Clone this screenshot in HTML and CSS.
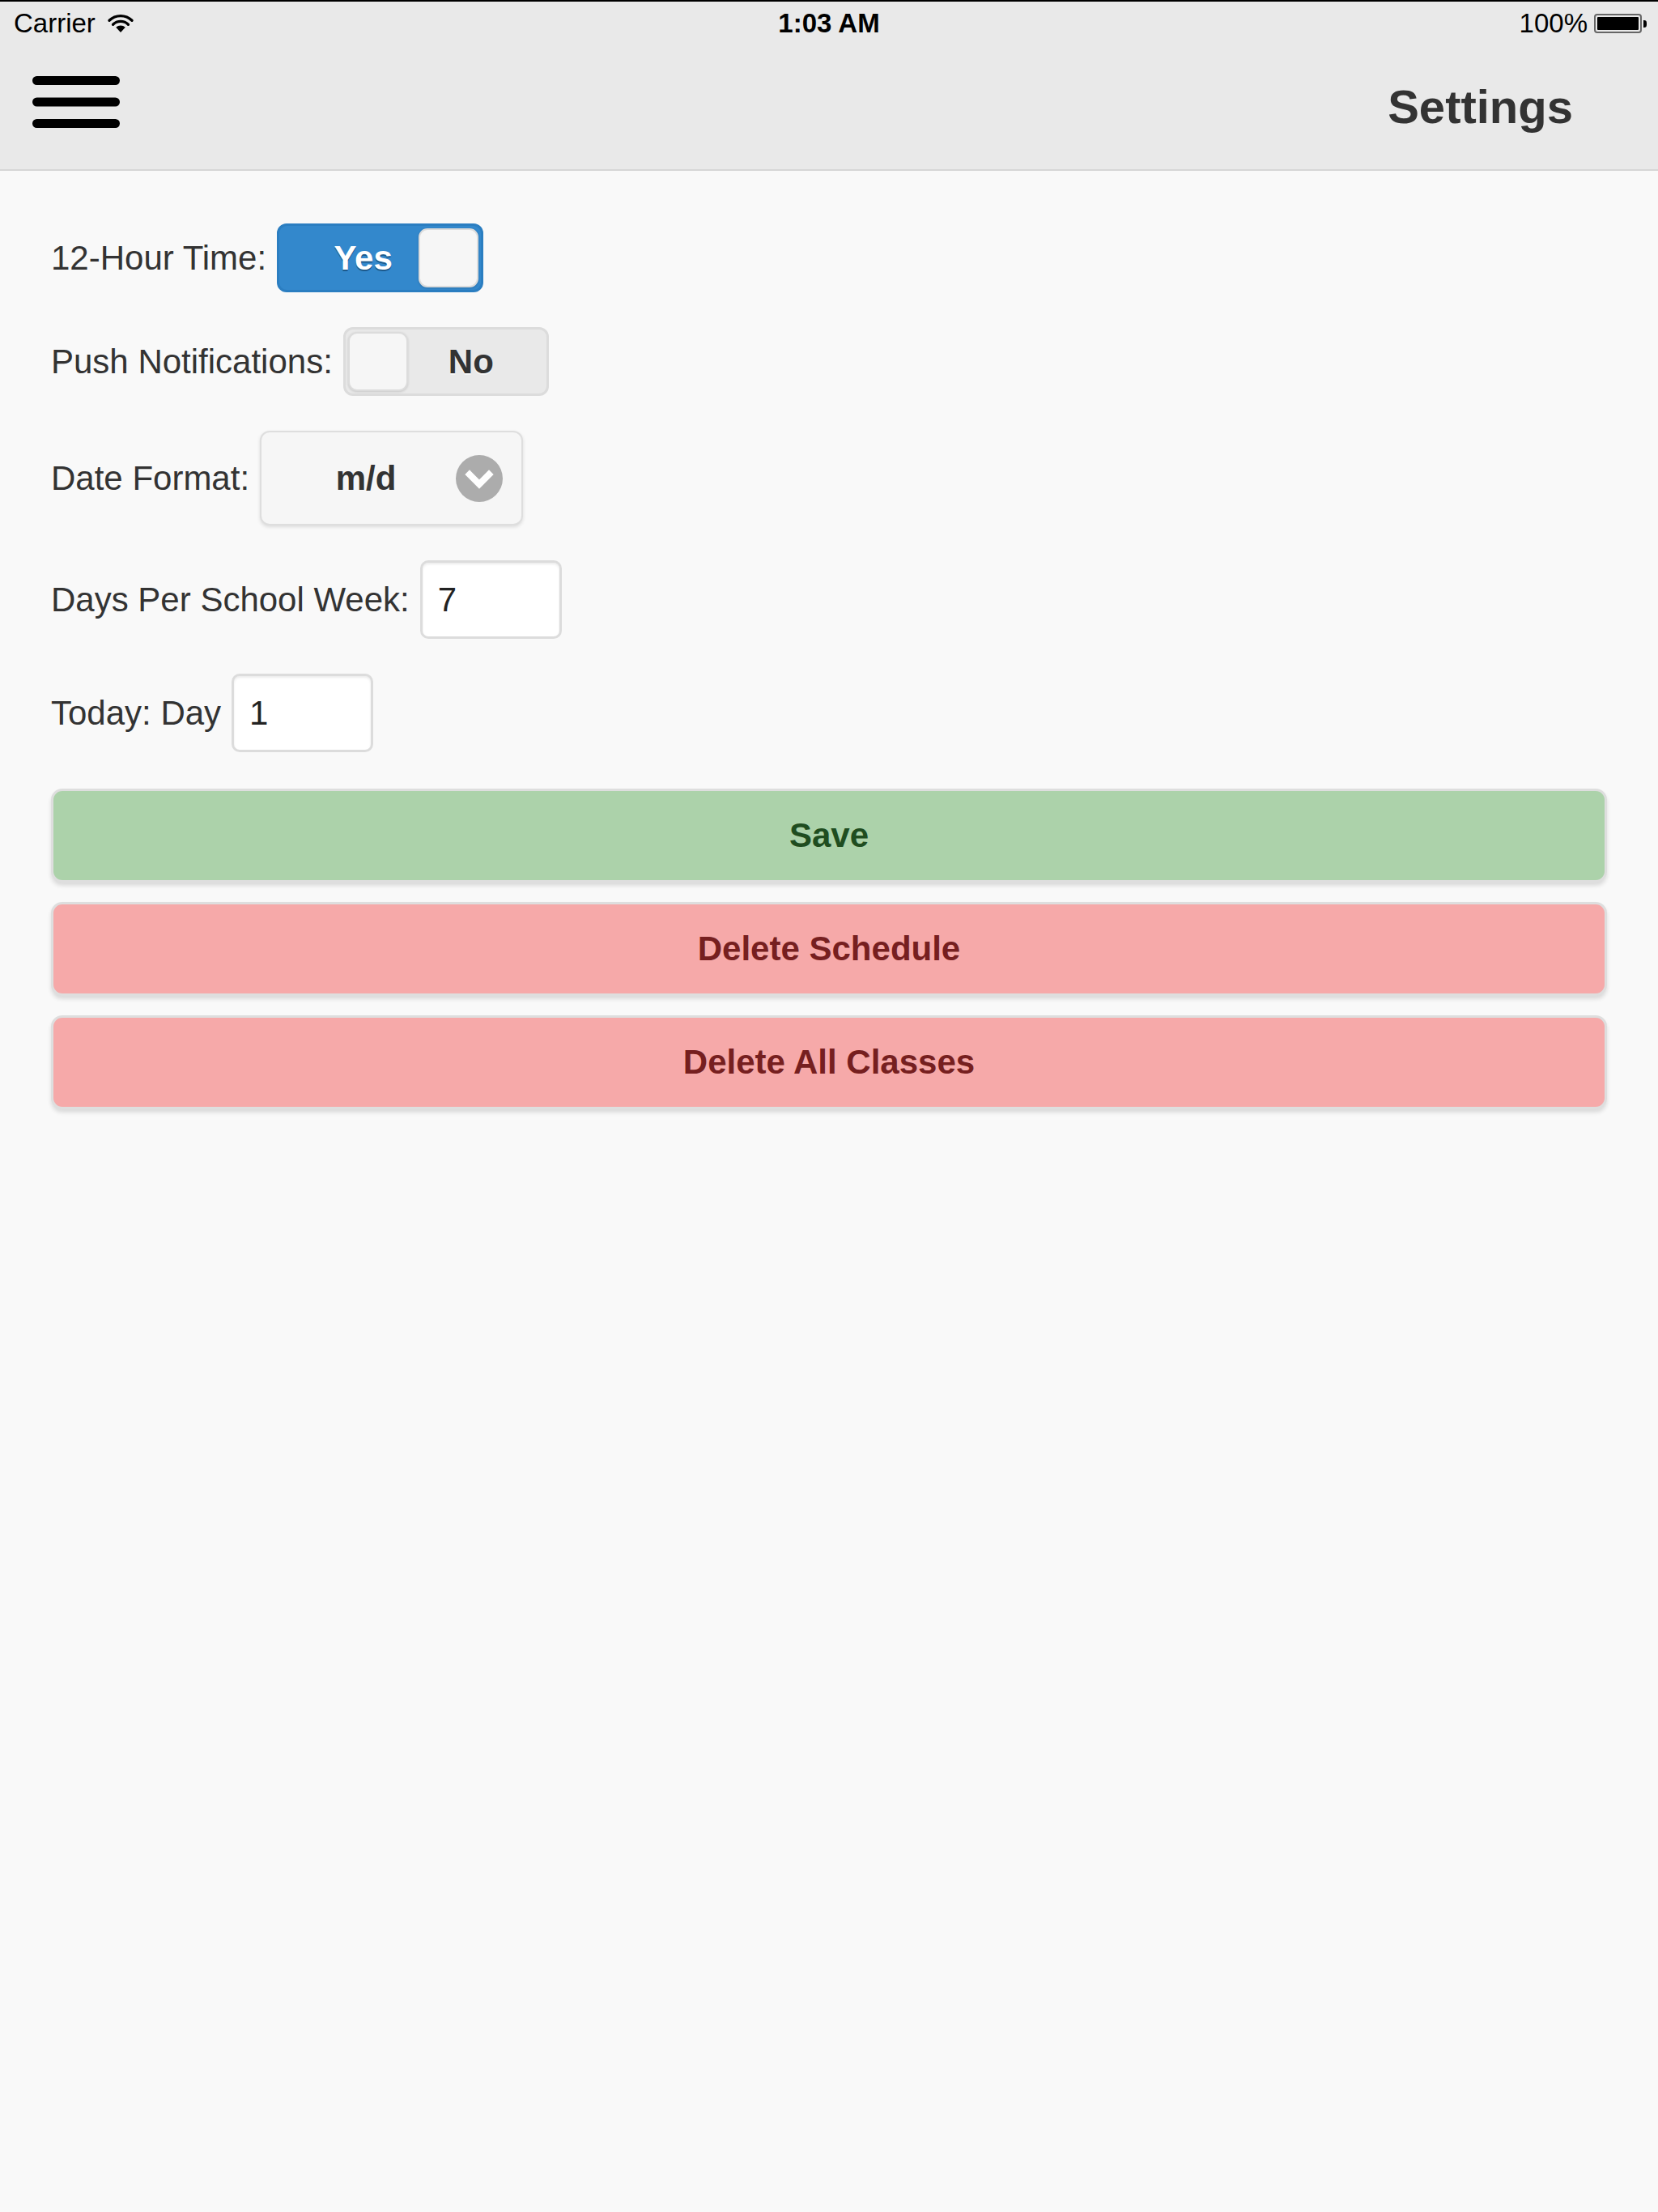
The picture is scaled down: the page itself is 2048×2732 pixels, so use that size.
FILE: index.html
```html
<!DOCTYPE html>
<html>
<head>
<meta charset="utf-8">
<link rel="stylesheet" href="styles.css">
</head>
<body>
<header class="top">
  <div class="statusbar">
    <div class="sb-left">
      <span>Carrier</span>
      <svg class="wifi" width="34" height="24" viewBox="0 0 34 24">
        <path d="M17 23 L11.2 16.8 A8.5 8.5 0 0 1 22.8 16.8 Z" fill="#000"/>
        <path d="M7.6 13.2 A13.5 13.5 0 0 1 26.4 13.2" fill="none" stroke="#000" stroke-width="3.4" stroke-linecap="round"/>
        <path d="M3 8.3 A20 20 0 0 1 31 8.3" fill="none" stroke="#000" stroke-width="3.4" stroke-linecap="round"/>
      </svg>
    </div>
    <div class="sb-time">1:03 AM</div>
    <div class="sb-right">
      <span>100%</span>
      <span class="battery"><span class="battery-fill"></span></span>
      <span class="battery-nub"></span>
    </div>
  </div>
  <div class="navbar">
    <svg class="hamburger" width="108" height="64" viewBox="0 0 108 64">
      <rect x="0" y="0" width="108" height="11" rx="5.5" fill="#000"/>
      <rect x="0" y="26.5" width="108" height="11" rx="5.5" fill="#000"/>
      <rect x="0" y="53" width="108" height="11" rx="5.5" fill="#000"/>
    </svg>
    <h1 class="title">Settings</h1>
  </div>
</header>

<main class="content">
  <div class="row">
    <label class="lbl">12-Hour Time:</label>
    <div class="flip flip-on">
      <span class="flip-text">Yes</span>
      <span class="knob"></span>
    </div>
  </div>

  <div class="row">
    <label class="lbl">Push Notifications:</label>
    <div class="flip flip-off">
      <span class="knob"></span>
      <span class="flip-text">No</span>
    </div>
  </div>

  <div class="row">
    <label class="lbl">Date Format:</label>
    <div class="select">
      <span class="select-text">m/d</span>
      <span class="chev">
        <svg width="58" height="58" viewBox="0 0 58 58">
          <circle cx="29" cy="29" r="29" fill="#acacac"/>
          <path d="M17 24 L29 36 L41 24" fill="none" stroke="#fff" stroke-width="8" stroke-linecap="square"/>
        </svg>
      </span>
    </div>
  </div>

  <div class="row">
    <label class="lbl">Days Per School Week:</label>
    <div class="input">7</div>
  </div>

  <div class="row">
    <label class="lbl">Today: Day</label>
    <div class="input">1</div>
  </div>

  <div class="buttons">
    <button class="btn btn-save">Save</button>
    <button class="btn btn-del">Delete Schedule</button>
    <button class="btn btn-del">Delete All Classes</button>
  </div>
</main>
</body>
</html>
```

FILE: styles.css
```css
html, body {
  margin: 0;
  padding: 0;
}
body {
  width: 2048px;
  min-height: 2732px;
  background: #f9f9f9;
  font-family: "Liberation Sans", Arial, Helvetica, sans-serif;
  color: #333;
}

.top {
  background: #e9e9e9;
  border-top: 2px solid #000;
  border-bottom: 2px solid #d6d6d6;
  height: 211px;
  box-sizing: border-box;
}

.statusbar {
  height: 54px;
  display: flex;
  align-items: center;
  justify-content: space-between;
  padding: 0 14px 0 17px;
  font-size: 33px;
  color: #000;
  position: relative;
}
.sb-left {
  display: flex;
  align-items: center;
  gap: 14px;
}
.wifi {
  display: block;
}
.sb-time {
  position: absolute;
  left: 0;
  right: 0;
  text-align: center;
  font-weight: bold;
  pointer-events: none;
}
.sb-right {
  display: flex;
  align-items: center;
  gap: 8px;
}
.battery {
  display: block;
  width: 59px;
  height: 24px;
  box-sizing: border-box;
  border: 2px solid #666;
  border-radius: 4px;
  padding: 2px;
}
.battery-fill {
  display: block;
  width: 100%;
  height: 100%;
  background: #000;
  border-radius: 1px;
}
.battery-nub {
  display: block;
  width: 4px;
  height: 9px;
  background: #000;
  border-radius: 0 3px 3px 0;
  margin-left: -6px;
}

.navbar {
  height: 153px;
  display: flex;
  align-items: center;
  justify-content: space-between;
  padding: 0 105px 0 40px;
}
.hamburger {
  display: block;
  margin-bottom: 14px;
}
.title {
  margin: 0 0 3px 0;
  font-size: 58px;
  font-weight: bold;
  color: #333;
}

.content {
  padding: 65px 63px 0 63px;
  display: flex;
  flex-direction: column;
  gap: 43px;
}
.row {
  display: flex;
  align-items: center;
  gap: 13px;
}
.lbl {
  font-size: 42px;
  color: #333;
}

.flip {
  width: 255px;
  height: 85px;
  box-sizing: border-box;
  border-radius: 12px;
  border: 3px solid;
  display: flex;
  align-items: center;
  padding: 0 3px;
  font-size: 42px;
  font-weight: bold;
}
.flip-on {
  background: #3388cc;
  border-color: #2b7ec1;
  color: #fff;
}
.flip-on .flip-text {
  flex: 1;
  text-align: center;
  padding-left: 32px;
  text-shadow: 0 2px 0 #1d5a8c;
}
.flip-off {
  width: 254px;
  background: #e9e9e9;
  border-color: #dcdcdc;
  color: #333;
}
.flip-off .flip-text {
  flex: 1;
  text-align: center;
  padding-right: 12px;
  text-shadow: 0 2px 0 #f6f6f6;
}
.knob {
  width: 74px;
  height: 73px;
  box-sizing: border-box;
  background: #f6f6f6;
  border: 2px solid #dcdcdc;
  border-radius: 11px;
  box-shadow: 0 1px 3px rgba(0,0,0,0.15);
}

.select {
  width: 325px;
  height: 117px;
  box-sizing: border-box;
  background: #f6f6f6;
  border: 2px solid #dedede;
  border-radius: 12px;
  box-shadow: 0 2px 4px rgba(0,0,0,0.12);
  display: flex;
  align-items: center;
  padding: 0 23px 0 0;
}
.select-text {
  flex: 1;
  text-align: center;
  font-size: 42px;
  font-weight: bold;
  color: #333;
  padding-left: 18px;
}
.chev svg {
  display: block;
}

.input {
  width: 175px;
  height: 97px;
  box-sizing: border-box;
  background: #fff;
  border: 3px solid #dcdcdc;
  border-radius: 10px;
  box-shadow: inset 0 2px 3px rgba(0,0,0,0.08);
  display: flex;
  align-items: center;
  padding-left: 19px;
  font-size: 42px;
  color: #222;
}

.buttons {
  display: flex;
  flex-direction: column;
  gap: 24px;
  margin-top: 2px;
}
.btn {
  display: block;
  width: 100%;
  height: 116px;
  box-sizing: border-box;
  border: 3px solid #dedede;
  border-radius: 14px;
  box-shadow: 0 4px 5px rgba(0,0,0,0.12);
  font-family: "Liberation Sans", Arial, Helvetica, sans-serif;
  font-size: 42px;
  font-weight: bold;
  text-align: center;
  padding: 0;
}
.btn-save {
  background: #acd2aa;
  color: #1f4d20;
}
.btn-del {
  background: #f6a9a9;
  color: #761f20;
}
```
